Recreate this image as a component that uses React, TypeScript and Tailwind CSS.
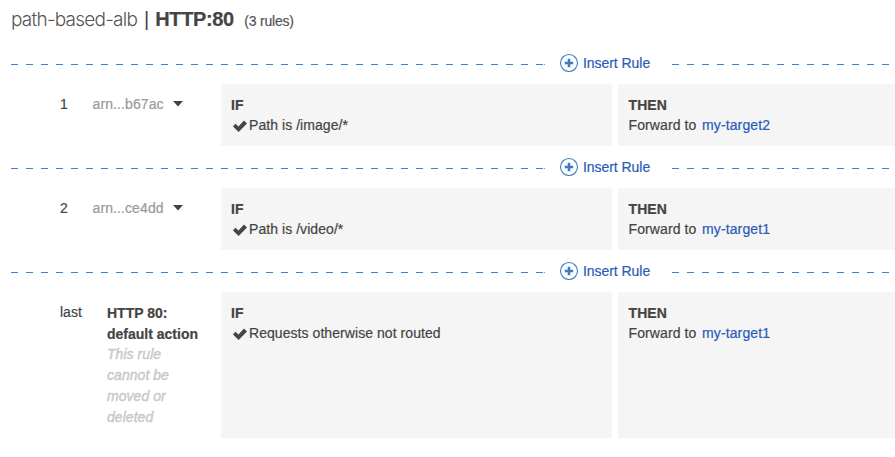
import type { ReactNode } from "react";

function Dashes({ className }: { className: string }) {
  return (
    <div
      className={`h-px bg-[repeating-linear-gradient(to_right,#3f7fd0_0,#3f7fd0_7px,transparent_7px,transparent_15px)] ${className}`}
    />
  );
}

function InsertRule() {
  return (
    <div className="flex h-[42px] items-start pl-[11px]">
      <Dashes className="mt-[22px] w-[533px] shrink-0" />
      <div className="mt-[22px] h-px w-px shrink-0 bg-[#6f9edb]" />
      <div className="ml-[14px] mt-[11px] flex w-[113px] shrink-0 items-center text-[#2a5bb8]">
        <svg width="20" height="20" viewBox="0 0 20 20" fill="none" className="shrink-0">
          <circle cx="10" cy="10" r="8.5" stroke="#3f7ac2" strokeWidth="1.1" />
          <path d="M10 5.8v8.4M5.8 10h8.4" stroke="#3f7ac2" strokeWidth="2.6" />
        </svg>
        <span className="ml-1 whitespace-nowrap leading-5 tracking-[-0.05px]">Insert Rule</span>
      </div>
      <Dashes className="mt-[22px] flex-1" />
    </div>
  );
}

function Check() {
  return (
    <svg width="14" height="12" viewBox="0 0 14 12" className="ml-[2px] mt-[5px] shrink-0">
      <path d="M0 6.5 2.5 3.8l3 2.8L11 0.6 14 3.5 5.6 12Z" fill="#444" />
    </svg>
  );
}

function Rule({
  index,
  label,
  condition,
  target,
}: {
  index: string;
  label: ReactNode;
  condition: string;
  target: string;
}) {
  return (
    <div className="flex">
      <div className="flex w-[221px] shrink-0 py-[10px] pl-[60px] leading-[21px]">
        <div className="w-[32px] shrink-0">{index}</div>
        {label}
      </div>
      <div className="w-[391px] shrink-0 bg-[#f5f5f5] pb-[11px] pl-[10px] pt-[10px]">
        <div className="pt-px font-bold leading-5">IF</div>
        <div className="flex leading-5">
          <Check />
          <span className="ml-[2px] tracking-[0.06px]">{condition}</span>
        </div>
      </div>
      <div className="ml-[6px] flex-1 bg-[#f5f5f5] pb-[11px] pl-[10.5px] pt-[10px]">
        <div className="pt-px font-bold leading-5 tracking-[0.1px]">THEN</div>
        <div className="flex leading-5">
          <span className="w-[73.5px] tracking-[0.1px]">Forward to</span>
          <span className="tracking-[0.12px] text-[#2a5bb8]">{target}</span>
        </div>
      </div>
    </div>
  );
}

function Arn({ name }: { name: string }) {
  return (
    <div className="flex text-[#999]">
      <span className="w-[81px] pl-[0.5px] tracking-[0.1px]">{name}</span>
      <svg width="11" height="6" viewBox="0 0 11 6" className="mt-[7px]">
        <path d="M0 0h10L5 5.5Z" fill="#444" />
      </svg>
    </div>
  );
}

export default function App() {
  return (
    <div className="h-[457px] w-[895px] overflow-hidden bg-white font-['Liberation_Sans',Arial,sans-serif] text-[14px] text-[#444] [-webkit-text-stroke:0.2px]">
      <header className="flex h-[42px] items-baseline whitespace-nowrap pl-[11px] pt-[5px] text-[20px] leading-7">
        <span className="w-[128px] font-['Inter',sans-serif] text-[19px] font-light tracking-[-0.76px] text-[#555] [-webkit-text-stroke:0px]">
          path-based-alb
        </span>
        <span className="ml-[5px] font-light [-webkit-text-stroke:0px]">|</span>
        <span className="ml-[6px] w-[89px] font-bold tracking-[-0.35px]">HTTP:80</span>
        <span className="text-[14px] tracking-[-0.2px] text-[#555]">(3 rules)</span>
      </header>
      <InsertRule />
      <Rule index="1" label={<Arn name="arn...b67ac" />} condition="Path is /image/*" target="my-target2" />
      <InsertRule />
      <Rule index="2" label={<Arn name="arn...ce4dd" />} condition="Path is /video/*" target="my-target1" />
      <InsertRule />
      <Rule
        index="last"
        label={
          <div className="ml-[15px] w-[96px] shrink-0">
            <div className="-mb-px pt-px font-bold">
              HTTP 80:
              <br />
              default action
            </div>
            <div className="w-[76px] italic tracking-[0.05px] text-[#c8c8c8] [-webkit-text-stroke:0.4px]">
              This rule cannot be moved or deleted
            </div>
          </div>
        }
        condition="Requests otherwise not routed"
        target="my-target1"
      />
    </div>
  );
}
